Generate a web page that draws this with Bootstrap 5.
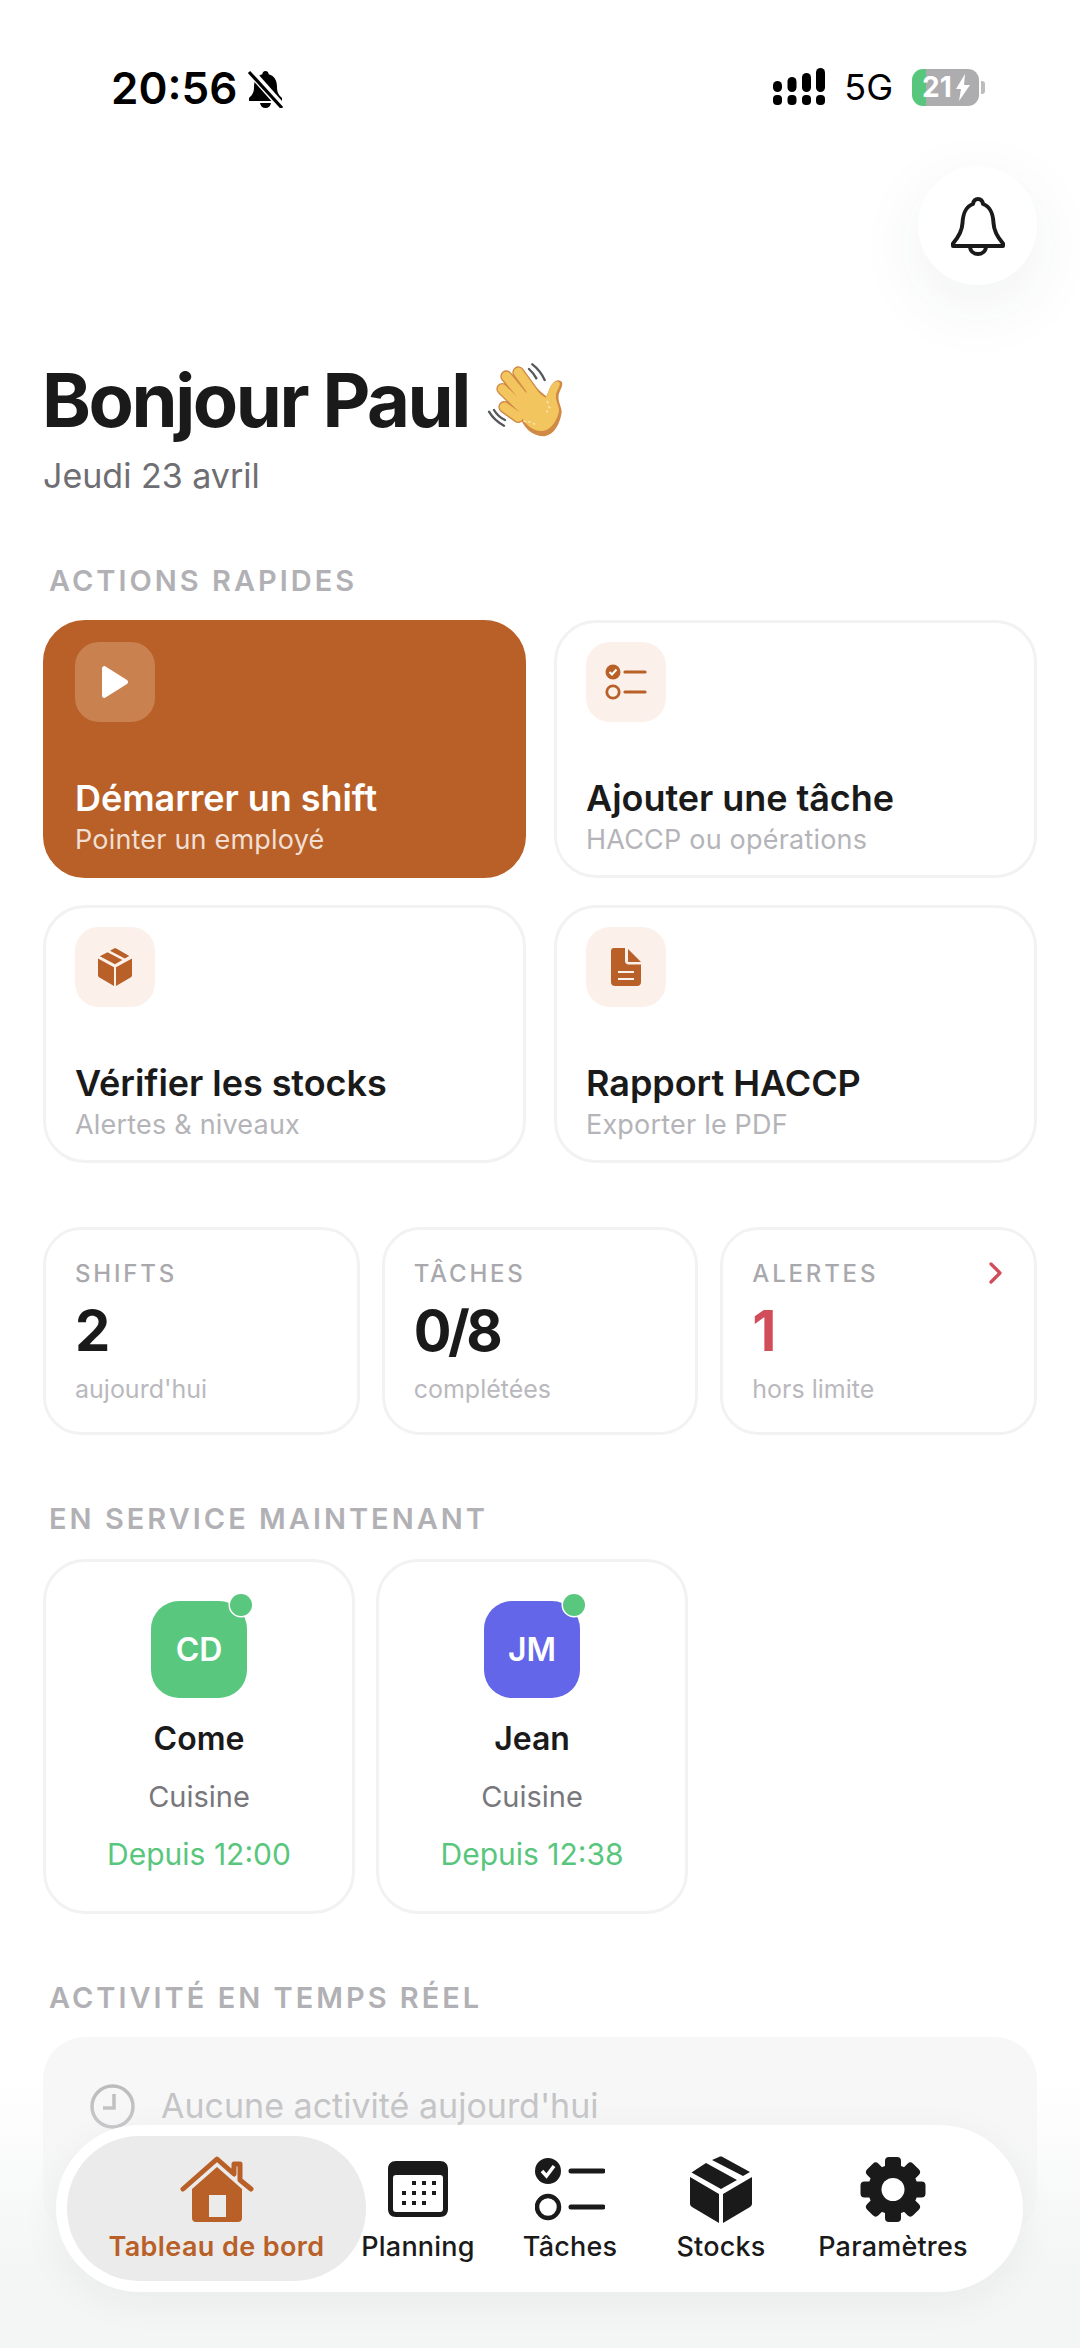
<!DOCTYPE html>
<html lang="fr">
<head>
  <meta charset="UTF-8" />
  <meta name="viewport" content="width=device-width, initial-scale=1" />
  <title>Tableau de bord</title>
  <link href="https://cdn.jsdelivr.net/npm/bootstrap@5.3.3/dist/css/bootstrap.min.css" rel="stylesheet" />
  <style>
    html, body { height: 2348px; overflow: hidden; }
    body {
      font-family: "Inter", "Liberation Sans", sans-serif;
      color: #1a1a1a;
      background: #fff;
      position: relative;
    }
    /* status bar */
    .status-row { height: 166px; padding: 68px 95px 0 111px; }
    .clock-time { font-size: 44px; line-height: 38px; font-weight: 600; color: #000; }
    .mute-bell { margin-left: 10px; margin-top: 2px; }
    .net-type { font-size: 36px; line-height: 38px; color: #000; font-weight: 400; margin: 0 19px; }
    .battery-body {
      width: 67px; height: 37px; border-radius: 11px;
      background: linear-gradient(90deg, #58c67c 21%, #adadaf 21%);
      color: #fff; font-size: 28px; line-height: 37px; font-weight: 700; padding-left: 10px;
    }
    .battery-nub { width: 4px; height: 13px; background: #bdbdbd; border-radius: 0 3px 3px 0; margin-left: 2px; }
    /* header */
    .bell-btn {
      width: 119px; height: 119px; margin-right: 43px; border: 0; background: #fff;
      box-shadow: 0 20px 70px rgba(40, 60, 60, .07);
    }
    .hello { font-size: 74px; line-height: 88px; font-weight: 700; letter-spacing: -2.4px; margin: 71px 0 0; padding-left: 42px; }
    .hello svg { margin: -1px -3px -1px 10px; flex: none; }
    .today { font-size: 34px; line-height: 40px; color: #6e6e73; margin: 12px 0 0; padding-left: 43px; }
    .block-title {
      font-size: 29px; line-height: 34px; font-weight: 600; letter-spacing: 3px; color: #b1b1b5;
      padding-left: 49px; margin: 0;
    }
    .page-pad { padding: 0 43px; }
    /* quick actions */
    .quick-grid { display: grid; grid-template-columns: 1fr 1fr; gap: 27px 28px; margin-top: 22px; }
    .quick-card {
      height: 258px; padding: 19px 29px; border: 3px solid #f2f2f3; border-radius: 42px; background: #fff;
    }
    .quick-card.is-main { background: #b86028; border-color: #b86028; color: #fff; }
    .quick-icon { width: 80px; height: 80px; border-radius: 24px; background: #fbf0ea; }
    .is-main .quick-icon { background: #c98150; }
    .quick-name { font-size: 36px; line-height: 42px; font-weight: 600; margin-top: 55px; letter-spacing: -.05px; white-space: nowrap; }
    .quick-sub { font-size: 27px; line-height: 34px; color: #b4b4b8; letter-spacing: .2px; margin-top: 4px; }
    .is-main .quick-sub { color: #f1dfd3; }
    /* counters */
    .stat-grid { display: grid; grid-template-columns: repeat(3, 1fr); gap: 22px; margin-top: 64px; }
    .stat-card { height: 208px; padding: 29px 29px 0; border: 3px solid #f2f2f3; border-radius: 38px; position: relative; }
    .stat-label { font-size: 24px; line-height: 30px; font-weight: 500; letter-spacing: 2.8px; color: #a9a9ad; }
    .stat-num { font-size: 56px; line-height: 68px; font-weight: 700; margin-top: 8px; letter-spacing: -3.5px; }
    .stat-sub { font-size: 25px; line-height: 32px; color: #b9b9bd; margin-top: 8px; }
    .stat-arrow { position: absolute; top: 32px; right: 31px; }
    .text-alert { color: #d14d5a; }
    /* staff on duty */
    .staff-row { margin-top: 23px; gap: 21px; }
    .staff-card { width: 312px; height: 355px; border: 3px solid #f2f2f3; border-radius: 42px; padding-top: 39px; text-align: center; }
    .staff-face {
      width: 96px; height: 97px; border-radius: 28px; margin: 0 auto; position: relative;
      color: #fff; font-size: 32px; line-height: 97px; font-weight: 600;
    }
    .face-green { background: #5ac77f; }
    .face-indigo { background: #6366e8; }
    .staff-dot {
      position: absolute; top: -7px; right: -5px; width: 22px; height: 22px; border-radius: 50%;
      background: #5ac77f; box-shadow: 0 0 0 1.5px #fff;
    }
    .staff-name { font-size: 32px; line-height: 40px; font-weight: 600; margin-top: 21px; }
    .staff-role { font-size: 29px; line-height: 36px; color: #77777c; margin-top: 20px; }
    .staff-since { font-size: 30px; line-height: 36px; color: #58c67c; margin-top: 21px; }
    /* activity */
    .activity-box { height: 200px; margin-top: 22px; padding: 43px 47px; border-radius: 42px; background: #f7f7f7; color: #bdbdc0; font-size: 34px; line-height: 52px; }
    .activity-box svg { margin-right: 26px; }
    /* bottom haze + tab bar */
    .bottom-haze { position: absolute; left: 0; right: 0; bottom: 0; height: 270px; background: linear-gradient(rgba(244,245,245,0), #f4f5f5 70%); }
    .tab-bar {
      position: absolute; left: 56px; bottom: 56px; width: 967px; height: 167px; padding: 11px;
      border-radius: 84px; background: #fff; box-shadow: 0 10px 40px rgba(40, 50, 50, .05);
    }
    .tab-item { height: 145px; padding-top: 20px; font-size: 27px; line-height: 34px; font-weight: 500; letter-spacing: .2px; color: #1a1a1a; text-align: center; flex: none; white-space: nowrap; }
    .tab-item svg { display: block; margin: 0 auto 7px; height: 67px; }
    .tab-item.is-on { width: 299px; background: #ebebeb; border-radius: 72px; color: #b86028; font-weight: 600; letter-spacing: .4px; }
    .tab-plan { width: 152px; margin-left: -24px; }
    .tab-todo { width: 152px; }
    .tab-stock { width: 150px; }
    .tab-gear { width: 194px; }
  </style>
</head>
<body>

  <!-- Status bar -->
  <div class="status-row d-flex justify-content-between align-items-start">
    <div class="d-flex align-items-center">
      <span class="clock-time">20:56</span>
      <svg class="mute-bell" width="37" height="38" viewBox="0 0 37 38">
        <path d="M18.500 1c2 0 3 1.500 3.200 3.200C27.500 5.800 30 10.500 30 17c0 5 1.500 8 5 11v3H2v-3c3.500-3 5-6 5-11 0-6.500 2.500-11.200 8.300-12.800C15.500 2.500 16.500 1 18.500 1zM13 33h11c-.5 3-2.500 5-5.500 5S13.500 36 13 33z" fill="#000"/>
        <path d="M3 1l32 36" stroke="#fff" stroke-width="8"/>
        <path d="M2 2l33 36" stroke="#000" stroke-width="3.200"/>
      </svg>
    </div>
    <div class="d-flex align-items-center">
      <svg width="52" height="38" viewBox="0 0 52 38" fill="#000">
        <rect x="0" y="13" width="9" height="11" rx="4.500"/><rect x="14.500" y="9" width="9" height="15" rx="4.500"/>
        <rect x="29" y="5" width="9" height="19" rx="4.500"/><rect x="43" y="0" width="9" height="24" rx="4.500"/>
        <rect x="0" y="27" width="9" height="10" rx="4"/><rect x="14.500" y="27" width="9" height="10" rx="4"/>
        <rect x="29" y="27" width="9" height="10" rx="4"/><rect x="43" y="27" width="9" height="10" rx="4"/>
      </svg>
      <span class="net-type">5G</span>
      <div class="battery-body d-flex align-items-center">21
        <svg class="ms-1" width="14" height="27" viewBox="0 0 14 27"><path d="M9 0L0 15h5l-2 12 11-16H8z" fill="#fff"/></svg>
      </div>
      <div class="battery-nub"></div>
    </div>
  </div>

  <!-- Header -->
  <div class="d-flex justify-content-end">
    <button class="bell-btn rounded-circle d-flex align-items-center justify-content-center" type="button" aria-label="Notifications">
      <svg width="56" height="60" viewBox="0 0 56 60" fill="none" stroke="#1a1a1a" stroke-width="4" stroke-linejoin="round">
        <path d="M28 3c3 0 4.500 2 5 5 8 3 10 10 10.500 19 .3 7 3 13 9.500 20.500V50H3v-2.500C9.500 40 12.200 34 12.500 27 13 18 15 11 23 8c.5-3 2-5 5-5z"/>
        <path d="M20 50c0 5 3.500 8 8 8s8-3 8-8"/>
      </svg>
    </button>
  </div>
  <h1 class="hello d-flex align-items-start">Bonjour Paul
    <!-- waving hand -->
    <svg width="95" height="90" viewBox="0 0 285 270">
      <path d="M160 28c16 12 29 29 37 47M150 42c9 8 16 17 22 28M30 170c10 17 26 32 45 42M45 165c7 12 18 23 33 30" fill="none" stroke="#55585a" stroke-width="7" stroke-linecap="round"/>
      <path d="M120 178c12 42 40 66 76 66 30-4 48-40 52-72 1-16-12-30-9-52 3-14 14-26 10-38-6-10-20-8-30 6-9 11-11 26-17 36-14-10-32-28-48-42z" fill="#d08a45"/>
      <g stroke="#d08a45" stroke-width="36" stroke-linecap="round">
        <path d="M118 52l52 72M82 64l68 82M70 102l64 62M76 156l42 30"/>
      </g>
      <g stroke="#f3c55f" stroke-width="28" stroke-linecap="round">
        <path d="M118 52l52 72M82 64l68 82M70 102l64 62M76 156l42 30"/>
      </g>
      <path d="M124 174c12 36 38 56 68 54 28-6 44-36 48-60 1-16-12-28-9-50 3-14 14-26 11-34-5-8-16-5-24 6-9 11-10 28-18 38-14-8-38-32-50-42z" fill="#f3c55f"/>
      <path d="M135 198l5 2M150 200l3 1M164 206l3 1M205 140l2 3M210 155l2 3M203 168l2 2" stroke="#f9e3ae" stroke-width="5" stroke-linecap="round"/>
    </svg>
  </h1>
  <p class="today">Jeudi 23 avril</p>

  <!-- Quick actions -->
  <h2 class="block-title" style="margin-top:68px">ACTIONS RAPIDES</h2>
  <div class="page-pad">
    <div class="quick-grid">
      <div class="quick-card is-main">
        <div class="quick-icon d-flex align-items-center justify-content-center">
          <svg width="30" height="34" viewBox="0 0 30 34"><path d="M2 3.500v27c0 2 2 3 3.500 2L27 19c1.500-1 1.500-3 0-4L5.500 1.500C4 .5 2 1.500 2 3.500z" fill="#fff"/></svg>
        </div>
        <div class="quick-name">Démarrer un shift</div>
        <div class="quick-sub">Pointer un employé</div>
      </div>
      <div class="quick-card">
        <div class="quick-icon d-flex align-items-center justify-content-center">
          <svg width="42" height="36" viewBox="0 0 42 36">
            <circle cx="8" cy="8" r="7.500" fill="#b86028"/><path d="M4.500 8l2.500 2.500 4.500-5" fill="none" stroke="#fff" stroke-width="2"/>
            <circle cx="8" cy="28" r="6.200" fill="none" stroke="#b86028" stroke-width="2.800"/>
            <path d="M20 8h20M20 28h20" stroke="#b86028" stroke-width="3.200" stroke-linecap="round"/>
          </svg>
        </div>
        <div class="quick-name">Ajouter une tâche</div>
        <div class="quick-sub">HACCP ou opérations</div>
      </div>
      <div class="quick-card">
        <div class="quick-icon d-flex align-items-center justify-content-center">
          <svg width="34" height="38" viewBox="0 0 34 38" fill="#b86028">
            <path d="M16 .5c.8-.4 1.500-.4 2.300 0l13 7.500-4.500 2.600L12 2.800zM9.500 4.200l14.800 7.900L17 16.300 1.800 8.200zM0 10.500l16 8.700V38L1.500 29.500C.5 29 0 28 0 27zM34 10.500V27c0 1-.5 2-1.500 2.500L18 38V19.200z"/>
          </svg>
        </div>
        <div class="quick-name">Vérifier les stocks</div>
        <div class="quick-sub">Alertes &amp; niveaux</div>
      </div>
      <div class="quick-card">
        <div class="quick-icon d-flex align-items-center justify-content-center">
          <svg width="30" height="38" viewBox="0 0 30 38" fill="#b86028">
            <path d="M3 0h11v13c0 2 1.500 3.500 3.500 3.500H30V34c0 2.500-1.500 4-4 4H4c-2.500 0-4-1.500-4-4V3c0-2 1-3 3-3zM7 23v2h16v-2zM7 30v2h16v-2z" fill-rule="evenodd"/>
            <path d="M17 1l13 13H18c-.6 0-1-.4-1-1z"/>
          </svg>
        </div>
        <div class="quick-name">Rapport HACCP</div>
        <div class="quick-sub">Exporter le PDF</div>
      </div>
    </div>

    <!-- Counters -->
    <div class="stat-grid">
      <div class="stat-card">
        <div class="stat-label">SHIFTS</div>
        <div class="stat-num">2</div>
        <div class="stat-sub">aujourd'hui</div>
      </div>
      <div class="stat-card">
        <div class="stat-label">TÂCHES</div>
        <div class="stat-num">0/8</div>
        <div class="stat-sub">complétées</div>
      </div>
      <div class="stat-card">
        <div class="stat-label">ALERTES</div>
        <svg class="stat-arrow" width="14" height="22" viewBox="0 0 14 22"><path d="M2 2l9 9-9 9" fill="none" stroke="#d14d5a" stroke-width="3.200" stroke-linecap="round" stroke-linejoin="round"/></svg>
        <div class="stat-num text-alert">1</div>
        <div class="stat-sub">hors limite</div>
      </div>
    </div>
  </div>

  <!-- Staff on duty -->
  <h2 class="block-title" style="margin-top:67px">EN SERVICE MAINTENANT</h2>
  <div class="page-pad">
    <div class="staff-row d-flex">
      <div class="staff-card">
        <div class="staff-face face-green">CD<span class="staff-dot"></span></div>
        <div class="staff-name">Come</div>
        <div class="staff-role">Cuisine</div>
        <div class="staff-since">Depuis 12:00</div>
      </div>
      <div class="staff-card">
        <div class="staff-face face-indigo">JM<span class="staff-dot"></span></div>
        <div class="staff-name">Jean</div>
        <div class="staff-role">Cuisine</div>
        <div class="staff-since">Depuis 12:38</div>
      </div>
    </div>
  </div>

  <!-- Activity feed -->
  <h2 class="block-title" style="margin-top:67px">ACTIVITÉ EN TEMPS RÉEL</h2>
  <div class="page-pad">
    <div class="activity-box d-flex align-items-start">
      <svg width="45" height="45" viewBox="0 0 45 45" class="mt-1" fill="none" stroke="#b9b9bc" stroke-width="3.500">
        <circle cx="22.500" cy="22.500" r="20.500"/><path d="M24 10v14H13"/>
      </svg>
      <span>Aucune activité aujourd'hui</span>
    </div>
  </div>

  <div class="bottom-haze"></div>

  <!-- Tab bar -->
  <nav class="tab-bar d-flex">
    <div class="tab-item is-on">
      <svg width="74" height="67" viewBox="0 0 74 67">
        <path d="M3 33L37 3l17 15V8h6v16l11 9" fill="none" stroke="#b86028" stroke-width="5" stroke-linecap="round" stroke-linejoin="round"/>
        <path d="M37 11l25 22v29c0 2.500-1.500 4-4 4H16c-2.500 0-4-1.500-4-4V33zM29 39v22h17V39z" fill="#b86028" fill-rule="evenodd"/>
      </svg>
      Tableau de bord
    </div>
    <div class="tab-item tab-plan">
      <svg width="62" height="67" viewBox="0 0 62 67">
        <path d="M9 5h44c5 0 8 3 8 8v40c0 5-3 8-8 8H9c-5 0-8-3-8-8V13c0-5 3-8 8-8zM9 19c-2 0-3 1-3 3v31c0 2 1 3 3 3h44c2 0 3-1 3-3V22c0-2-1-3-3-3z" fill="#1a1a1a" fill-rule="evenodd"/>
        <g fill="#1a1a1a"><rect x="25" y="25" width="4" height="4"/><rect x="35" y="25" width="4" height="4"/><rect x="45" y="25" width="4" height="4"/>
        <rect x="15" y="35" width="4" height="4"/><rect x="25" y="35" width="4" height="4"/><rect x="35" y="35" width="4" height="4"/><rect x="45" y="35" width="4" height="4"/>
        <rect x="15" y="45" width="4" height="4"/><rect x="25" y="45" width="4" height="4"/><rect x="35" y="45" width="4" height="4"/></g>
      </svg>
      Planning
    </div>
    <div class="tab-item tab-todo">
      <svg width="70" height="67" viewBox="0 0 70 67">
        <circle cx="13" cy="15" r="13" fill="#1a1a1a"/><path d="M7 15l4.500 5L19 10" fill="none" stroke="#fff" stroke-width="3.500"/>
        <circle cx="13" cy="51" r="11" fill="none" stroke="#1a1a1a" stroke-width="4.500"/>
        <path d="M36 15h32M36 51h32" stroke="#1a1a1a" stroke-width="5" stroke-linecap="round"/>
      </svg>
      Tâches
    </div>
    <div class="tab-item tab-stock">
      <svg width="62" height="67" viewBox="0 0 62 67" fill="#1a1a1a">
        <path d="M29 1c1-.6 2.600-.6 3.600 0L60 16l-7 4L22 4zM16 7l31 17-16 9L1.500 16.500zM0 21l29 17v29L2 51c-1.300-.8-2-2-2-3.500zM62 21v26.500c0 1.500-.7 2.700-2 3.500L33 67V38z"/>
      </svg>
      Stocks
    </div>
    <div class="tab-item tab-gear">
      <!-- gear: body plus four bars through the centre make the eight teeth -->
      <svg width="66" height="67" viewBox="0 0 66 67">
        <g fill="#1a1a1a">
          <circle cx="33" cy="33.500" r="25"/>
          <rect x="25" y="1" width="16" height="65" rx="4"/>
          <rect x="25" y="1" width="16" height="65" rx="4" transform="rotate(45 33 33.500)"/>
          <rect x="25" y="1" width="16" height="65" rx="4" transform="rotate(90 33 33.500)"/>
          <rect x="25" y="1" width="16" height="65" rx="4" transform="rotate(135 33 33.500)"/>
        </g>
        <circle cx="33" cy="33.500" r="11.500" fill="#fff"/>
      </svg>
      Paramètres
    </div>
  </nav>

<script src="https://cdn.jsdelivr.net/npm/bootstrap@5.3.3/dist/js/bootstrap.bundle.min.js"></script>
</body>
</html>
